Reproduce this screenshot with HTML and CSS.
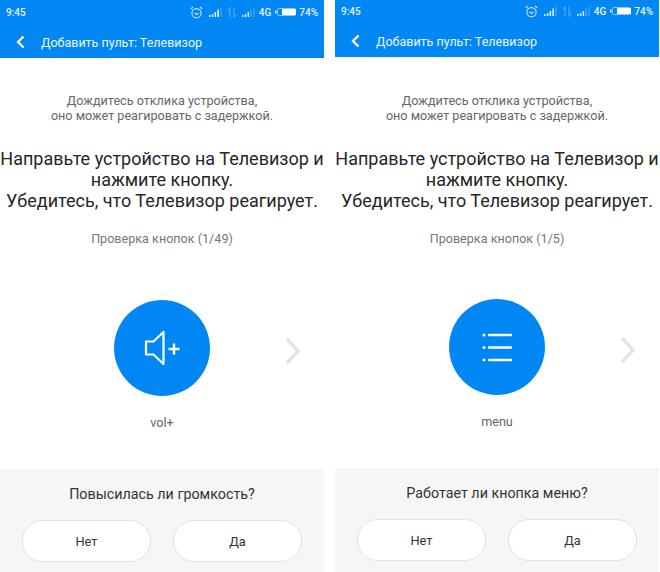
FILE: index.html
```html
<!DOCTYPE html>
<html lang="ru">
<head>
<meta charset="utf-8">
<title>Добавить пульт</title>
<link rel="stylesheet" href="styles.css">
</head>
<body>
<main class="phones">
  <section class="screen">
    <header class="header">
      <div class="status">
        <span class="time">9:45</span>
        <span class="status-icons">
          <svg class="ic-alarm" width="13" height="13" viewBox="0 0 13 13"><circle cx="6.500" cy="7.200" r="4.600" fill="none" stroke="#cfe6fd" stroke-width="1.100"/><path d="M.7 3 3 1M12.300 3 10 1M4.500 6.800 6.500 8.500l2-1.700" fill="none" stroke="#cfe6fd" stroke-width="1.100"/></svg>
          <svg class="ic-signal" width="13" height="9" viewBox="0 0 13 9"><path d="M0 7h1.500v2H0zM2.800 6h1.500v3H2.800zM5.600 4h1.500v5H5.600z" fill="#e6f2ff"/><path d="M8.400 1.500h1.500V9H8.400z" fill="#f2f8ff"/><path d="M11.500 0h1v9h-1z" fill="#57acf8"/></svg>
          <svg class="ic-data" width="10" height="11" viewBox="0 0 10 11"><path d="M3 10.500V1L.8 3.500M7 .5V10l2.200-2.500" fill="none" stroke="#4fa8f8" stroke-width="1.200"/></svg>
          <svg class="ic-signal" width="13" height="9" viewBox="0 0 13 9"><path d="M0 7h1.500v2H0zM2.800 6h1.500v3H2.800zM5.600 4h1.500v5H5.600z" fill="#d8ebfe"/><path d="M8.400 1.500h1.200V9H8.400zM11.500 0h1v9h-1z" fill="#57acf8"/></svg>
          <span class="net">4G</span>
          <svg class="ic-batt" width="21" height="8" viewBox="0 0 21 8"><path d="M0 2.500h1.500v3H0z" fill="#d8ebfe"/><rect x="2.500" y=".5" width="18" height="7" rx="1" fill="#0087f4" stroke="#8cc6fa"/><rect x="7" y="1" width="14" height="6" fill="#fff"/></svg>
          <span class="pct">74%</span>
        </span>
      </div>
      <div class="appbar">
        <svg class="back" width="10" height="14" viewBox="0 0 10 14"><path d="M7.500 1.500 2 7l5.500 5.500" fill="none" stroke="#fff" stroke-width="2.300"/></svg>
        <span class="title">Добавить пульт: Телевизор</span>
      </div>
    </header>
    <div class="body">
      <p class="hint">Дождитесь отклика устройства,<br>оно может реагировать с задержкой.</p>
      <p class="lead">Направьте устройство на Телевизор и<br>нажмите кнопку.<br>Убедитесь, что Телевизор реагирует.</p>
      <p class="progress">Проверка кнопок (1/49)</p>
      <div class="key-row">
        <div class="key">
          <svg width="36" height="36" viewBox="0 0 36 36"><path d="M2 11.500h7.500L19.500 2v32L9.500 24.500H2z" fill="none" stroke="#fff" stroke-width="2.200" stroke-linejoin="round"/><path d="M24.500 19h11M30 13.500v11" fill="none" stroke="#fff" stroke-width="2.400"/></svg>
        </div>
        <svg class="next" width="18" height="28" viewBox="0 0 18 28"><path d="M3 2 14 14 3 26" fill="none" stroke="#e4e4e4" stroke-width="3.400"/></svg>
      </div>
      <p class="label">vol+</p>
    </div>
    <footer class="footer">
      <p class="question">Повысилась ли громкость?</p>
      <div class="answers">
        <button class="answer" type="button">Нет</button>
        <button class="answer" type="button">Да</button>
      </div>
    </footer>
  </section>

  <section class="screen screen-alt">
    <header class="header">
      <div class="status">
        <span class="time">9:45</span>
        <span class="status-icons">
          <svg class="ic-alarm" width="13" height="13" viewBox="0 0 13 13"><circle cx="6.500" cy="7.200" r="4.600" fill="none" stroke="#cfe6fd" stroke-width="1.100"/><path d="M.7 3 3 1M12.300 3 10 1M4.500 6.800 6.500 8.500l2-1.700" fill="none" stroke="#cfe6fd" stroke-width="1.100"/></svg>
          <svg class="ic-signal" width="13" height="9" viewBox="0 0 13 9"><path d="M0 7h1.500v2H0zM2.800 6h1.500v3H2.800zM5.600 4h1.500v5H5.600z" fill="#e6f2ff"/><path d="M8.400 1.500h1.500V9H8.400z" fill="#f2f8ff"/><path d="M11.500 0h1v9h-1z" fill="#57acf8"/></svg>
          <svg class="ic-data" width="10" height="11" viewBox="0 0 10 11"><path d="M3 10.500V1L.8 3.500M7 .5V10l2.200-2.500" fill="none" stroke="#4fa8f8" stroke-width="1.200"/></svg>
          <svg class="ic-signal" width="13" height="9" viewBox="0 0 13 9"><path d="M0 7h1.500v2H0zM2.800 6h1.500v3H2.800zM5.600 4h1.500v5H5.600z" fill="#d8ebfe"/><path d="M8.400 1.500h1.200V9H8.400zM11.500 0h1v9h-1z" fill="#57acf8"/></svg>
          <span class="net">4G</span>
          <svg class="ic-batt" width="21" height="8" viewBox="0 0 21 8"><path d="M0 2.500h1.500v3H0z" fill="#d8ebfe"/><rect x="2.500" y=".5" width="18" height="7" rx="1" fill="#0087f4" stroke="#8cc6fa"/><rect x="7" y="1" width="14" height="6" fill="#fff"/></svg>
          <span class="pct">74%</span>
        </span>
      </div>
      <div class="appbar">
        <svg class="back" width="10" height="14" viewBox="0 0 10 14"><path d="M7.500 1.500 2 7l5.500 5.500" fill="none" stroke="#fff" stroke-width="2.300"/></svg>
        <span class="title">Добавить пульт: Телевизор</span>
      </div>
    </header>
    <div class="body">
      <p class="hint">Дождитесь отклика устройства,<br>оно может реагировать с задержкой.</p>
      <p class="lead">Направьте устройство на Телевизор и<br>нажмите кнопку.<br>Убедитесь, что Телевизор реагирует.</p>
      <p class="progress">Проверка кнопок (1/5)</p>
      <div class="key-row">
        <div class="key">
          <svg width="30" height="30" viewBox="0 0 30 30"><path d="M7 3h22M7 15.500h22M7 28h22" fill="none" stroke="#fff" stroke-width="2.400" stroke-linecap="round"/><circle cx="2" cy="3" r="1.500" fill="#fff"/><circle cx="2" cy="15.500" r="1.500" fill="#fff"/><circle cx="2" cy="28" r="1.500" fill="#fff"/></svg>
        </div>
        <svg class="next" width="18" height="28" viewBox="0 0 18 28"><path d="M3 2 14 14 3 26" fill="none" stroke="#e4e4e4" stroke-width="3.400"/></svg>
      </div>
      <p class="label">menu</p>
    </div>
    <footer class="footer">
      <p class="question">Работает ли кнопка меню?</p>
      <div class="answers">
        <button class="answer" type="button">Нет</button>
        <button class="answer" type="button">Да</button>
      </div>
    </footer>
  </section>
</main>
</body>
</html>
```

FILE: styles.css
```css
* { box-sizing: border-box; }
html, body { margin: 0; padding: 0; background: #fff; }
body { width: 660px; height: 572px; overflow: hidden; font-family: Roboto, "Noto Sans", sans-serif; }
p { margin: 0; }

.phones { display: flex; gap: 11px; height: 572px; }
.screen { width: 324px; height: 572px; display: flex; flex-direction: column; }

.header { height: 58px; background: #0087f4; color: #fff; flex: none; }
.screen-alt .header { height: 57px; }
.status { height: 24px; padding: 0 6px; display: flex; align-items: center; justify-content: space-between; }
.screen-alt .status { height: 22px; }
.time { font-size: 10px; font-weight: 500; color: #e6f3ff; }
.status-icons { display: flex; align-items: center; color: #e6f3ff; font-size: 10px; font-weight: 500; }
.ic-alarm { margin-right: 6px; }
.ic-signal { margin-right: 5px; }
.ic-data { margin-right: 5px; }
.net { margin-right: 4px; margin-left: -1px; }
.ic-batt { margin-right: 3px; }

.appbar { height: 34px; padding: 2px 0 0 16px; display: flex; align-items: center; }
.screen-alt .appbar { height: 35px; padding-top: 3px; }
.title { margin-left: 15px; font-size: 12.500px; color: #eef7ff; white-space: nowrap; }

.body { flex: 1; display: flex; flex-direction: column; align-items: center; text-align: center; min-height: 0; }
.hint { margin-top: 35px; font-size: 12.600px; line-height: 15px; color: #666; white-space: nowrap; }
.screen-alt .hint { margin-top: 36px; }
.lead { margin-top: 25px; font-size: 18px; line-height: 21px; color: #262626; white-space: nowrap; }
.progress { margin-top: 20px; font-size: 12.600px; line-height: 16px; color: #777; }
.key-row { margin-top: 53px; width: 100%; height: 96px; position: relative; display: flex; justify-content: center; }
.screen-alt .key-row { margin-top: 52px; }
.key { width: 96px; height: 96px; border-radius: 50%; background: #0087f4; display: flex; align-items: center; justify-content: center; }
.next { position: absolute; left: 284px; top: 37px; }
.label { margin-top: 19px; font-size: 12.600px; line-height: 16px; color: #666; }

.footer { height: 103px; flex: none; background: #f6f6f6; padding: 17px 22px 0; }
.screen-alt .footer { height: 104px; }
.question { font-size: 14.300px; line-height: 17px; color: #333; text-align: center; }
.answers { margin-top: 17px; display: flex; justify-content: space-between; }
.answer { width: 129px; height: 42px; border-radius: 21px; border: 1px solid #e2e2e2; background: #fff; font: 12.800px Roboto, sans-serif; color: #333; padding: 0; }
```
